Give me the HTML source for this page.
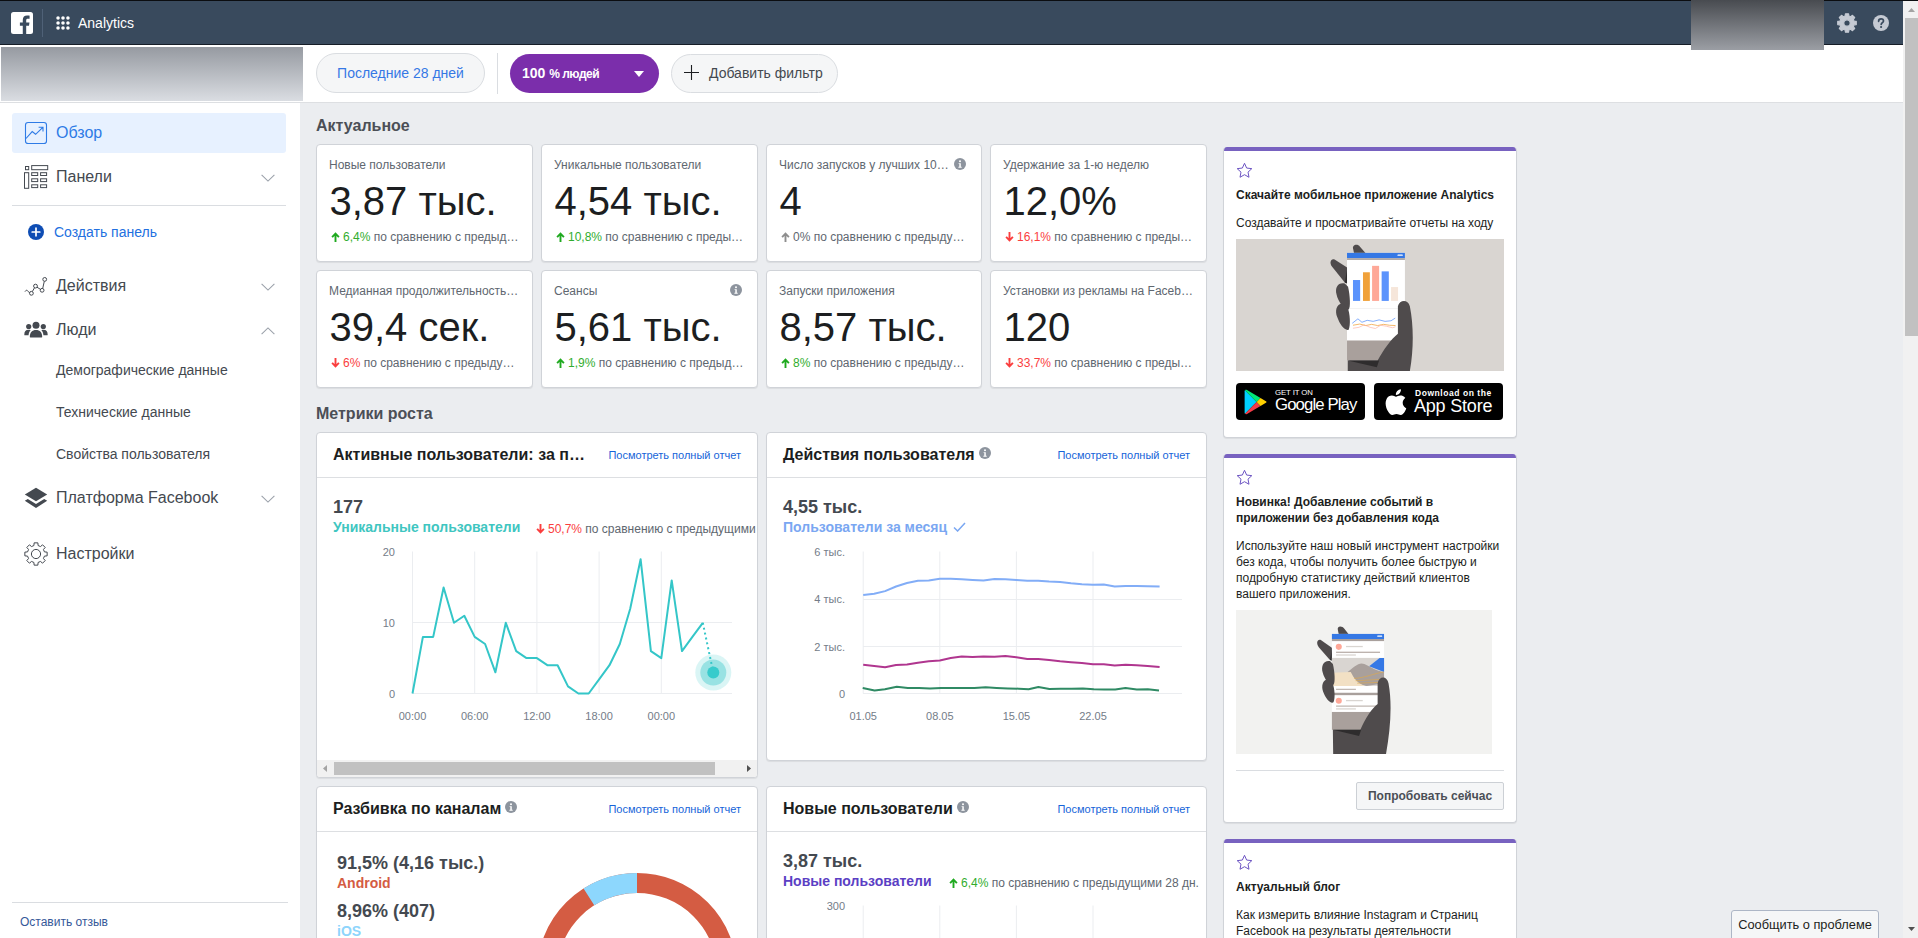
<!DOCTYPE html>
<html lang="ru">
<head>
<meta charset="utf-8">
<title>Analytics</title>
<style>
*{box-sizing:border-box;margin:0;padding:0}
html,body{width:1918px;height:938px;overflow:hidden}
body{position:relative;background:#ebedf0;font-family:"Liberation Sans",Arial,Helvetica,sans-serif;font-size:12px;color:#1c1e21}
.abs{position:absolute}
/* top bar */
#topline{left:0;top:0;width:1918px;height:1px;background:#0b0d10}
#nav{left:0;top:1px;width:1903px;height:44px;background:#394a5d;border-bottom:1px solid #161d27}
#nav .sep{left:42px;top:8px;width:1px;height:28px;background:#4f6177}
#nav .title{left:78px;top:14px;font-size:14px;color:#fff;letter-spacing:0;line-height:16px}
#blur1{left:1691px;top:0;width:133px;height:50px;background:linear-gradient(#484b50,#9b9ea4)}
/* scrollbar */
#sb{left:1903px;top:1px;width:15px;height:937px;background:#f1f1f1}
#sb .thumb{left:2px;top:17px;width:13px;height:318px;background:#c1c1c1}
/* filter bar */
#fbar{left:0;top:45px;width:1903px;height:58px;background:#fff;border-bottom:1px solid #dddfe2}
#blur2{left:1px;top:47px;width:302px;height:54px;background:linear-gradient(#969aa1,#dadde2)}
.pill{height:40px;border-radius:20px;line-height:38px;white-space:nowrap}
#p1{left:316px;top:53px;width:169px;border:1px solid #dadde1;background:#f5f6f7;color:#3578e5;font-size:14px;text-align:center}
#fsep{left:497px;top:53px;width:1px;height:41px;background:#dadde1}
#p2{left:510px;top:54px;width:149px;height:39px;border-radius:19.500px;background:#7b2eab;color:#fff;font-weight:bold;font-size:12px;letter-spacing:-.5px;line-height:38px;padding-left:12px}
#p2 b{font-size:14px;letter-spacing:0;margin-right:1px}
#p2 i{position:absolute;left:124px;top:17px;border:5px solid transparent;border-top:6px solid #fff;border-bottom:0}
#p3{left:671px;top:54px;width:167px;height:39px;border-radius:19.500px;border:1px solid #dadde1;background:#f5f6f7;color:#444950;font-size:14px;line-height:36px;padding-left:37px}
#p3 svg{position:absolute;left:12px;top:10px}
/* sidebar */
#side{left:0;top:103px;width:300px;height:835px;background:#fff}
.nav1{left:12px;width:274px;height:40px;border-radius:3px;font-size:16px;color:#444950;line-height:40px;padding-left:44px}
.nav1 svg.ic{position:absolute;left:12px;top:8px}
.nav1 svg.ch{position:absolute;left:249px;top:17px}
.nav1.sel{background:#e7f1ff;color:#2e7be6}
.sub{left:56px;font-size:14px;color:#444950;line-height:18px}
.hr{height:1px;background:#dadde1}
/* section titles */
.stitle{font-size:16px;font-weight:bold;color:#4b4f56;line-height:20px}
/* stat cards */
.card{background:#fff;border:1px solid #d0d3d8;border-radius:4px;box-shadow:0 1px 1px rgba(0,0,0,.07)}
.stat{width:217px;height:118px}
.stat .lb{position:absolute;left:12px;top:13px;width:190px;font-size:12px;color:#606770;line-height:14px;white-space:nowrap;overflow:hidden;text-overflow:ellipsis}
.stat .num{position:absolute;left:12.500px;top:33px;font-size:40px;line-height:46px;color:#1c1e21;white-space:nowrap}
.stat .ch{position:absolute;left:13px;top:85px;width:190px;font-size:12px;line-height:14px;color:#606770;white-space:nowrap;overflow:hidden;text-overflow:ellipsis}
.up{color:#31ad2e}.dn{color:#fa3e3e}.nt{color:#606770}
.up svg{color:#1fa91f}
.nt svg{color:#8e8e8e}
.ar{display:inline-block;vertical-align:-1px;margin-left:.500px;margin-right:3.500px}
.info{position:absolute}

/* chart cards */
.cc{overflow:hidden}
.cc .hd{position:absolute;left:0;top:0;right:0;height:45px;border-bottom:1px solid #dddfe2}
.cc .tt{position:absolute;left:16px;top:12px;font-size:16px;font-weight:bold;line-height:20px;color:#1c1e21;white-space:nowrap}
.cc .lk{position:absolute;right:16px;top:15px;font-size:11px;line-height:14px;color:#1664d9;white-space:nowrap}
.cc .big{position:absolute;font-size:18px;font-weight:bold;line-height:22px;color:#444950;white-space:nowrap}
.cc .ser{position:absolute;font-size:14px;font-weight:bold;line-height:18px;white-space:nowrap}
.cc .cmp{position:absolute;font-size:12px;line-height:14px;color:#606770;white-space:nowrap}
.cc svg text{font-family:"Liberation Sans",Arial,sans-serif;font-size:11px;fill:#747c88}
.cc .info{position:static;display:inline-block;vertical-align:1px;margin-left:4px}

/* right column */
.rc{width:294px;overflow:hidden;border-top:0}
.rc .bar{position:absolute;left:-1px;right:-1px;top:0;height:4px;background:#7862c0}
.rc .star{position:absolute;left:12px;top:15px}
.rc .h{position:absolute;left:12px;font-size:12px;font-weight:bold;line-height:16px;color:#1c1e21;white-space:nowrap}
.rc .p{position:absolute;left:12px;font-size:12px;line-height:16px;color:#1c1e21;white-space:nowrap}
.badge{position:absolute;top:235.500px;width:129px;height:37.500px;background:#000;border-radius:4px;color:#fff}
.badge span{position:absolute;white-space:nowrap;line-height:1}
.btn{position:absolute;background:#f5f6f7;border:1px solid #ccd0d5;border-radius:2px;font-size:12px;font-weight:bold;color:#4b4f56;text-align:center;white-space:nowrap}
</style>
</head>
<body>
<div id="topline" class="abs"></div>
<div id="nav" class="abs">
  <svg class="abs" style="left:11px;top:11px" width="22" height="22" viewBox="0 0 22 22"><rect width="22" height="22" rx="2.5" fill="#fff"/><path d="M15.2 22v-8.3h2.8l.45-3.3H15.2V8.3c0-.95.27-1.6 1.63-1.6h1.75V3.75c-.3-.04-1.34-.13-2.55-.13-2.52 0-4.25 1.54-4.25 4.37v2.4H8.9v3.3h2.88V22z" fill="#394a5d"/></svg>
  <div class="abs sep"></div>
  <svg class="abs" style="left:56px;top:15px" width="14" height="14" viewBox="0 0 15 15" fill="#fff"><circle cx="2.2" cy="2.2" r="1.9"/><circle cx="7.5" cy="2.2" r="1.9"/><circle cx="12.8" cy="2.2" r="1.9"/><circle cx="2.2" cy="7.5" r="1.9"/><circle cx="7.5" cy="7.5" r="1.9"/><circle cx="12.8" cy="7.5" r="1.9"/><circle cx="2.2" cy="12.8" r="1.9"/><circle cx="7.5" cy="12.8" r="1.9"/><circle cx="12.8" cy="12.8" r="1.9"/></svg>
  <div class="abs title">Analytics</div>
  <svg class="abs" style="left:1836px;top:11px" width="22" height="22" viewBox="0 0 22 22"><path d="M9.13 3.94L9.46 1.73L12.54 1.73L12.87 3.94L14.67 4.69L16.47 3.35L18.65 5.53L17.31 7.33L18.06 9.13L20.27 9.46L20.27 12.54L18.06 12.87L17.31 14.67L18.65 16.47L16.47 18.65L14.67 17.31L12.87 18.06L12.54 20.27L9.46 20.27L9.13 18.06L7.33 17.31L5.53 18.65L3.35 16.47L4.69 14.67L3.94 12.87L1.73 12.54L1.73 9.46L3.94 9.13L4.69 7.33L3.35 5.53L5.53 3.35L7.33 4.69Z M11 7.800A3.200 3.200 0 1 0 11 14.200A3.200 3.200 0 1 0 11 7.800Z" fill="#c5cad3" fill-rule="evenodd" stroke="#c5cad3" stroke-width="1.200" stroke-linejoin="round"/></svg>
  <svg class="abs" style="left:1873px;top:14px" width="16" height="16" viewBox="0 0 16 16"><circle cx="8" cy="8" r="8" fill="#c5cad3"/><path d="M5.600 6.300C5.600 4.700 6.700 3.900 8.100 3.900C9.500 3.900 10.500 4.700 10.500 6C10.500 7.600 8.500 7.700 8.200 9.400" fill="none" stroke="#394a5d" stroke-width="1.700" stroke-linecap="round"/><circle cx="8.100" cy="12" r="1.100" fill="#394a5d"/></svg>
</div>
<div id="sb" class="abs"><div class="abs thumb"></div>
  <svg class="abs" style="left:5px;top:7px" width="7" height="4" viewBox="0 0 7 4"><path d="M0 4L3.500 0L7 4z" fill="#a3a3a3"/></svg>
  <svg class="abs" style="left:5px;top:926px" width="7" height="4" viewBox="0 0 7 4"><path d="M0 0L3.500 4L7 0z" fill="#505050"/></svg>
</div>
<div id="fbar" class="abs"></div>
<div id="blur2" class="abs"></div>
<div id="blur1" class="abs"></div>
<div id="p1" class="abs pill">Последние 28 дней</div>
<div id="fsep" class="abs"></div>
<div id="p2" class="abs"><b>100</b> % людей<i></i></div>
<div id="p3" class="abs"><svg width="15" height="15" viewBox="0 0 15 15"><path d="M7.500 0v15M0 7.500h15" stroke="#1c1e21" stroke-width="1.100" fill="none"/></svg>Добавить фильтр</div>

<!-- SIDEBAR -->
<div id="side" class="abs"></div>
<div id="sidebar-items">
<div class="abs nav1 sel" style="top:113px"><svg class="ic" width="24" height="24" viewBox="0 0 24 24" fill="none" stroke="#2e7be6" stroke-width="1.1"><rect x="1.5" y="1.5" width="21" height="21" rx="2.6"/><path d="M2 17.5L8.2 10.6L11.6 13.3L18.6 6.6M14.6 6.2H19V10.6" stroke-linejoin="miter"/></svg>Обзор</div>
<div class="abs nav1" style="top:157px"><svg class="ic" width="25" height="24" viewBox="0 0 25 24" fill="none" stroke="#444950" stroke-width="1"><rect x="1.5" y="1.5" width="3.2" height="3.2"/><rect x="7.7" y="0.6" width="16" height="4.1"/><rect x="0.5" y="7.7" width="4.2" height="15.6"/><rect x="7.7" y="7.7" width="6" height="2.8"/><rect x="16.6" y="7.7" width="6" height="2.8"/><rect x="7.7" y="13.8" width="6" height="2.8"/><rect x="16.6" y="13.8" width="6" height="2.8"/><rect x="7.7" y="19.8" width="6" height="2.8"/><rect x="16.6" y="19.8" width="6" height="2.8"/></svg>Панели<svg class="ch" width="14" height="8" viewBox="0 0 14 8"><path d="M.6 .8L7 7.1L13.4 .8" fill="none" stroke="#9ba1aa" stroke-width="1.1"/></svg></div>
<div class="abs hr" style="left:12px;top:205px;width:274px"></div>
<svg class="abs" style="left:28px;top:224px" width="16" height="16" viewBox="0 0 16 16"><circle cx="8" cy="8" r="8" fill="#0e4db4"/><path d="M8 4.200v7.600M4.200 8h7.600" stroke="#fff" stroke-width="1.700" stroke-linecap="round"/></svg>
<div class="abs" style="left:54px;top:223px;font-size:14px;line-height:18px;color:#2370e0">Создать панель</div>
<div class="abs nav1" style="top:266px"><svg class="ic" width="24" height="24" viewBox="0 0 24 24" fill="none" stroke="#444950" stroke-width="1"><path d="M1 17.6c1-1.6 2-1.8 2.8-.6s1.400 1.600 2.1 1.500M8.3 17.600L10.500 13.800M13 13.200L16.500 15.400M18.700 14.500L20.300 7.300"/><circle cx="7.400" cy="19.300" r="1.900"/><circle cx="11.500" cy="12.100" r="1.900"/><circle cx="18.100" cy="16.300" r="1.900"/><circle cx="20.700" cy="5.400" r="1.900"/></svg>Действия<svg class="ch" width="14" height="8" viewBox="0 0 14 8"><path d="M.6 .8L7 7.1L13.4 .8" fill="none" stroke="#9ba1aa" stroke-width="1.1"/></svg></div>
<div class="abs nav1" style="top:310px"><svg class="ic" width="24" height="24" viewBox="0 0 24 24" fill="#444950"><circle cx="12" cy="7.300" r="3.500"/><circle cx="4.700" cy="8.500" r="2.600"/><circle cx="19.300" cy="8.500" r="2.600"/><path d="M5.800 18.900c0-4.600 2.300-7 6.200-7s6.200 2.400 6.200 7c0 .300-.200 .500-.500 .500H6.300c-.300 0-.500-.200-.500-.500z"/><path d="M.300 16.800c0-3.200 1.400-5 4.200-5 .800 0 1.500 .150 2.100 .450-1.300 1.300-1.900 3-2 5.100H.800c-.300 0-.500-.250-.500-.550z"/><path d="M23.700 16.800c0-3.200-1.400-5-4.200-5-.800 0-1.500 .150-2.100 .450 1.300 1.300 1.900 3 2 5.100h3.800c.300 0 .500-.250 .500-.550z"/></svg>Люди<svg class="ch" width="14" height="8" viewBox="0 0 14 8"><path d="M.6 7.2L7 .9L13.4 7.2" fill="none" stroke="#9ba1aa" stroke-width="1.1"/></svg></div>
<div class="abs sub" style="top:361px">Демографические данные</div>
<div class="abs sub" style="top:403px">Технические данные</div>
<div class="abs sub" style="top:445px">Свойства пользователя</div>
<div class="abs nav1" style="top:478px"><svg class="ic" width="24" height="24" viewBox="0 0 24 24" fill="#444950"><path d="M12 1.700L23.200 8.500L12 15.300L.800 8.500z"/><path d="M.800 14.700L3.800 12.900L12 17.900L20.200 12.900L23.200 14.700L12 21.900z"/></svg>Платформа Facebook<svg class="ch" width="14" height="8" viewBox="0 0 14 8"><path d="M.6 .8L7 7.1L13.4 .8" fill="none" stroke="#9ba1aa" stroke-width="1.1"/></svg></div>
<div class="abs nav1" style="top:534px"><svg class="ic" width="24" height="24" viewBox="0 0 24 24" fill="none" stroke="#444950" stroke-width="1" stroke-linejoin="round"><path d="M9.90 3.56L10.14 0.85L13.86 0.85L14.10 3.56L16.49 4.55L18.57 2.81L21.19 5.43L19.45 7.51L20.44 9.90L23.15 10.14L23.15 13.86L20.44 14.10L19.45 16.49L21.19 18.57L18.57 21.19L16.49 19.45L14.10 20.44L13.86 23.15L10.14 23.15L9.90 20.44L7.51 19.45L5.43 21.19L2.81 18.57L4.55 16.49L3.56 14.10L0.85 13.86L0.85 10.14L3.56 9.90L4.55 7.51L2.81 5.43L5.43 2.81L7.51 4.55Z"/><circle cx="12" cy="12" r="4.600"/></svg>Настройки</div>
<div class="abs hr" style="left:12px;top:902px;width:276px"></div>
<div class="abs" style="left:20px;top:915px;font-size:12px;line-height:14px;color:#365899">Оставить отзыв</div>
</div>

<!-- MAIN -->
<div class="abs stitle" style="left:316px;top:116px">Актуальное</div>
<div id="stats">
<div class="abs card stat" style="left:316px;top:144px"><div class="lb">Новые пользователи</div><div class="num">3,87 тыс.</div><div class="ch"><span class="up"><svg class="ar" width="9" height="10" viewBox="0 0 9 10"><path d="M4.500 10V2M1.100 5.200L4.500 1.700L7.900 5.200" fill="none" stroke="currentColor" stroke-width="1.900"/></svg>6,4%</span> по сравнению с предыдущими 28 дн.</div></div>
<div class="abs card stat" style="left:541px;top:144px"><div class="lb">Уникальные пользователи</div><div class="num">4,54 тыс.</div><div class="ch"><span class="up"><svg class="ar" width="9" height="10" viewBox="0 0 9 10"><path d="M4.500 10V2M1.100 5.200L4.500 1.700L7.900 5.200" fill="none" stroke="currentColor" stroke-width="1.900"/></svg>10,8%</span> по сравнению с предыдущими 28 дн.</div></div>
<div class="abs card stat" style="left:766px;top:144px;width:216px"><div class="lb" style="width:170px">Число запусков у лучших 10 % пользователей</div><svg class="info" style="left:187px;top:13px" width="12" height="12" viewBox="0 0 12 12"><circle cx="6" cy="6" r="6" fill="#8d949e"/><circle cx="6" cy="3.200" r="1" fill="#fff"/><path d="M4.600 5.200h2.200v3.600h.900v.900H4.400v-.900h.900V6.100h-.700z" fill="#fff"/></svg><div class="num">4</div><div class="ch"><span class="nt"><svg class="ar" width="9" height="10" viewBox="0 0 9 10"><path d="M4.500 10V2M1.100 5.200L4.500 1.700L7.900 5.200" fill="none" stroke="currentColor" stroke-width="1.900"/></svg>0%</span> по сравнению с предыдущими 28 дн.</div></div>
<div class="abs card stat" style="left:990px;top:144px"><div class="lb">Удержание за 1-ю неделю</div><div class="num">12,0%</div><div class="ch"><span class="dn"><svg class="ar" width="9" height="10" viewBox="0 0 9 10"><path d="M4.500 0V8M1.100 4.800L4.500 8.300L7.900 4.800" fill="none" stroke="currentColor" stroke-width="1.900"/></svg>16,1%</span> по сравнению с предыдущими 28 дн.</div></div>
<div class="abs card stat" style="left:316px;top:270px"><div class="lb">Медианная продолжительность сеанса</div><div class="num">39,4 сек.</div><div class="ch"><span class="dn"><svg class="ar" width="9" height="10" viewBox="0 0 9 10"><path d="M4.500 0V8M1.100 4.800L4.500 8.300L7.900 4.800" fill="none" stroke="currentColor" stroke-width="1.900"/></svg>6%</span> по сравнению с предыдущими 28 дн.</div></div>
<div class="abs card stat" style="left:541px;top:270px"><div class="lb" style="width:170px">Сеансы</div><svg class="info" style="left:188px;top:13px" width="12" height="12" viewBox="0 0 12 12"><circle cx="6" cy="6" r="6" fill="#8d949e"/><circle cx="6" cy="3.200" r="1" fill="#fff"/><path d="M4.600 5.200h2.200v3.600h.900v.900H4.400v-.900h.900V6.100h-.700z" fill="#fff"/></svg><div class="num">5,61 тыс.</div><div class="ch"><span class="up"><svg class="ar" width="9" height="10" viewBox="0 0 9 10"><path d="M4.500 10V2M1.100 5.200L4.500 1.700L7.900 5.200" fill="none" stroke="currentColor" stroke-width="1.900"/></svg>1,9%</span> по сравнению с предыдущими 28 дн.</div></div>
<div class="abs card stat" style="left:766px;top:270px;width:216px"><div class="lb">Запуски приложения</div><div class="num">8,57 тыс.</div><div class="ch"><span class="up"><svg class="ar" width="9" height="10" viewBox="0 0 9 10"><path d="M4.500 10V2M1.100 5.200L4.500 1.700L7.900 5.200" fill="none" stroke="currentColor" stroke-width="1.900"/></svg>8%</span> по сравнению с предыдущими 28 дн.</div></div>
<div class="abs card stat" style="left:990px;top:270px"><div class="lb">Установки из рекламы на Facebook</div><div class="num">120</div><div class="ch"><span class="dn"><svg class="ar" width="9" height="10" viewBox="0 0 9 10"><path d="M4.500 0V8M1.100 4.800L4.500 8.300L7.900 4.800" fill="none" stroke="currentColor" stroke-width="1.900"/></svg>33,7%</span> по сравнению с предыдущими 28 дн.</div></div>
</div>
<div class="abs stitle" style="left:316px;top:404px">Метрики роста</div>

<!-- CHARTS -->
<div id="charts">
<div class="abs card cc" style="left:316px;top:432px;width:442px;height:346px">
 <div class="hd"><div class="tt">Активные пользователи: за п…</div><div class="lk">Посмотреть полный отчет</div></div>
 <div class="big" style="left:16px;top:63px">177</div>
 <div class="ser" style="left:16px;top:85px;color:#3fc6c1">Уникальные пользователи</div>
 <div class="cmp" style="left:218px;top:89px"><span class="dn"><svg class="ar" width="9" height="10" viewBox="0 0 9 10"><path d="M4.500 0V8M1.100 4.800L4.500 8.300L7.900 4.800" fill="none" stroke="currentColor" stroke-width="1.900"/></svg>50,7%</span> по сравнению с предыдущими 24 ч</div>
 <svg class="abs" style="left:-1px;top:-1px" width="442" height="330" viewBox="0 0 442 330">
  <g fill="none" stroke="#ebedf0" stroke-width="1"><path d="M96.5 119.500V261.500" /><path d="M158.7 119.500V261.500" /><path d="M220.9 119.500V261.500" /><path d="M283.1 119.500V261.500" /><path d="M345.3 119.500V261.500" /><path d="M96 190.500H416M96 261.500H416"/></g>
  <text x="79" y="123.500" text-anchor="end">20</text><text x="79" y="194.500" text-anchor="end">10</text><text x="79" y="265.500" text-anchor="end">0</text>
  <text x="96.5" y="288" text-anchor="middle">00:00</text><text x="158.7" y="288" text-anchor="middle">06:00</text><text x="220.9" y="288" text-anchor="middle">12:00</text><text x="283.1" y="288" text-anchor="middle">18:00</text><text x="345.3" y="288" text-anchor="middle">00:00</text>
  <polyline points="96.5,261.5 106.9,204.9 117.2,204.9 127.6,155.5 138.0,190.8 148.3,183.7 158.7,204.9 169.1,212.0 179.4,240.3 189.8,190.8 200.2,219.1 210.5,226.1 220.9,226.1 231.3,233.2 241.6,233.2 252.0,254.4 262.4,261.5 272.7,261.5 283.1,247.4 293.5,233.2 303.8,212.0 314.2,176.7 324.6,127.2 334.9,219.1 345.3,226.1 355.7,148.4 366.0,219.1 376.4,204.9 386.8,190.8" fill="none" stroke="#34c6c8" stroke-width="2" stroke-linejoin="round"/>
  <path d="M386.8 190.8L397.3 240.5" stroke="#34c6c8" stroke-width="2" stroke-dasharray="2 3" fill="none"/>
  <circle cx="397.3" cy="240.5" r="18" fill="#34c6c8" fill-opacity=".18"/><circle cx="397.3" cy="240.5" r="13" fill="#34c6c8" fill-opacity=".4"/><circle cx="397.3" cy="240.5" r="6" fill="#37cbcc"/>
 </svg>
 <div class="abs" style="left:0;top:327px;width:440px;height:17px;background:#f1f1f1">
   <div class="abs" style="left:17px;top:2px;width:381px;height:13px;background:#c1c1c1"></div>
   <svg class="abs" style="left:6px;top:5px" width="4" height="7" viewBox="0 0 4 7"><path d="M4 0L0 3.500L4 7z" fill="#a3a3a3"/></svg>
   <svg class="abs" style="left:430px;top:5px" width="4" height="7" viewBox="0 0 4 7"><path d="M0 0L4 3.500L0 7z" fill="#505050"/></svg>
 </div>
</div>
<div class="abs card cc" style="left:766px;top:432px;width:441px;height:329px">
 <div class="hd"><div class="tt">Действия пользователя<svg class="info" width="12" height="12" viewBox="0 0 12 12"><circle cx="6" cy="6" r="6" fill="#8d949e"/><circle cx="6" cy="3.200" r="1" fill="#fff"/><path d="M4.600 5.200h2.200v3.600h.900v.900H4.400v-.900h.900V6.100h-.700z" fill="#fff"/></svg></div><div class="lk">Посмотреть полный отчет</div></div>
 <div class="big" style="left:16px;top:63px">4,55 тыс.</div>
 <div class="ser" style="left:16px;top:85px;color:#7aa7f2">Пользователи за месяц <svg width="13" height="10" viewBox="0 0 13 10" style="margin-left:2px"><path d="M1 5.500L4.600 9L12 1" fill="none" stroke="#7aa7f2" stroke-width="1.500"/></svg></div>
 <svg class="abs" style="left:-1.500px;top:-1px" width="442" height="330" viewBox="0 0 442 330">
  <g fill="none" stroke="#ebedf0" stroke-width="1"><path d="M97.2 119.500V261.500" /><path d="M173.8 119.500V261.500" /><path d="M250.4 119.500V261.500" /><path d="M327.0 119.500V261.500" /><path d="M97 167.500H416M97 214.500H416M97 261.500H416"/></g>
  <text x="79" y="123.500" text-anchor="end">6 тыс.</text><text x="79" y="171" text-anchor="end">4 тыс.</text><text x="79" y="218.500" text-anchor="end">2 тыс.</text><text x="79" y="265.500" text-anchor="end">0</text>
  <text x="97.2" y="288" text-anchor="middle">01.05</text><text x="173.8" y="288" text-anchor="middle">08.05</text><text x="250.4" y="288" text-anchor="middle">15.05</text><text x="327.0" y="288" text-anchor="middle">22.05</text>
  <polyline points="97.2,163.1 108.2,161.7 119.1,159.1 130.0,154.5 141.0,151.0 151.9,148.7 162.8,148.4 173.8,146.7 184.7,146.7 195.7,147.3 206.6,147.9 217.5,148.4 228.5,147.0 239.4,147.3 250.3,148.1 261.3,148.7 272.2,148.7 283.1,149.6 294.1,149.9 305.0,151.3 315.9,152.2 326.9,152.7 337.8,152.5 348.7,154.5 359.7,153.9 370.6,153.9 381.6,154.2 393.6,154.5" fill="none" stroke="#82adf7" stroke-width="2" stroke-linejoin="round"/>
  <polyline points="97.2,232.7 108.2,233.9 119.1,235.3 130.0,233.0 141.0,232.5 151.9,230.7 162.8,229.3 173.8,228.4 184.7,226.1 195.7,224.4 206.6,225.0 217.5,224.4 228.5,224.7 239.4,224.1 250.3,225.3 261.3,227.0 272.2,227.0 283.1,228.1 294.1,229.3 305.0,230.2 315.9,231.0 326.9,232.2 337.8,232.2 348.7,233.6 359.7,232.7 370.6,233.3 381.6,233.9 393.6,235.1" fill="none" stroke="#b0368f" stroke-width="2" stroke-linejoin="round"/>
  <polyline points="96.7,256.1 108.6,258.5 118.9,257.3 130.8,254.7 141.8,256.1 153.0,255.9 164.0,256.4 175.2,256.1 186.5,256.1 197.5,255.9 208.4,255.9 219.7,255.3 230.6,255.9 241.9,256.4 252.9,256.7 262.6,257.3 272.4,255.0 283.4,257.0 294.4,256.7 305.6,256.7 316.9,256.4 327.8,257.3 338.2,257.6 349.2,257.6 359.5,256.1 370.8,257.6 381.8,257.3 393.0,258.5" fill="none" stroke="#2f8a64" stroke-width="2" stroke-linejoin="round"/>
 </svg>
</div>
<div class="abs card cc" style="left:316px;top:786px;width:442px;height:200px">
 <div class="hd"><div class="tt">Разбивка по каналам<svg class="info" width="12" height="12" viewBox="0 0 12 12"><circle cx="6" cy="6" r="6" fill="#8d949e"/><circle cx="6" cy="3.200" r="1" fill="#fff"/><path d="M4.600 5.200h2.200v3.600h.900v.900H4.400v-.900h.900V6.100h-.700z" fill="#fff"/></svg></div><div class="lk">Посмотреть полный отчет</div></div>
 <div class="big" style="left:20px;top:65px">91,5% (4,16 тыс.)</div>
 <div class="ser" style="left:20px;top:87px;color:#d45c43">Android</div>
 <div class="big" style="left:20px;top:113px">8,96% (407)</div>
 <div class="ser" style="left:20px;top:135px;color:#8ed5fc">iOS</div>
 <svg class="abs" style="left:200px;top:70px" width="240" height="130" viewBox="200 70 240 130">
  <circle cx="320" cy="186" r="90" fill="none" stroke="#d45c43" stroke-width="20"/>
  <path d="M320 96A90 90 0 0 0 271.900 109.900" fill="none" stroke="#8dd7fd" stroke-width="20"/>
 </svg>
</div>
<div class="abs card cc" style="left:766px;top:786px;width:441px;height:200px">
 <div class="hd"><div class="tt">Новые пользователи<svg class="info" width="12" height="12" viewBox="0 0 12 12"><circle cx="6" cy="6" r="6" fill="#8d949e"/><circle cx="6" cy="3.200" r="1" fill="#fff"/><path d="M4.600 5.200h2.200v3.600h.900v.900H4.400v-.900h.900V6.100h-.700z" fill="#fff"/></svg></div><div class="lk">Посмотреть полный отчет</div></div>
 <div class="big" style="left:16px;top:63px">3,87 тыс.</div>
 <div class="ser" style="left:16px;top:85px;color:#5b3fc4">Новые пользователи</div>
 <div class="cmp" style="left:181px;top:89px"><span class="up"><svg class="ar" width="9" height="10" viewBox="0 0 9 10"><path d="M4.500 10V2M1.100 5.200L4.500 1.700L7.900 5.200" fill="none" stroke="currentColor" stroke-width="1.900"/></svg>6,4%</span> по сравнению с предыдущими 28 дн.</div>
 <svg class="abs" style="left:-1.500px;top:-1px" width="442" height="200" viewBox="0 0 442 200">
  <g fill="none" stroke="#ebedf0" stroke-width="1"><path d="M97.2 119.500V200" /><path d="M173.8 119.500V200" /><path d="M250.4 119.500V200" /><path d="M327.0 119.500V200" /></g>
  <text x="79" y="123.500" text-anchor="end">300</text>
 </svg>
</div>
</div>
<!-- RIGHT -->
<div id="right">
<div class="abs card rc" style="left:1223px;top:147px;height:291px"><div class="bar"></div><svg class="star" width="17" height="17" viewBox="0 0 17 17"><path d="M8.500 1.300L10.650 6.050L15.800 6.650L12 10.150L13 15.250L8.500 12.700L4 15.250L5 10.150L1.200 6.650L6.350 6.050Z" fill="none" stroke="#6c54c2" stroke-width="1" stroke-linejoin="round"/></svg>
 <div class="h" style="top:40px">Скачайте мобильное приложение Analytics</div>
 <div class="p" style="top:68px">Создавайте и просматривайте отчеты на ходу</div>
 <svg class="abs" style="left:12px;top:92px" width="268" height="132" viewBox="0 0 268 132"><rect width="268" height="132" fill="#d9d5d1"/>
<g transform="translate(64,-3) scale(0.14925)">
<path d="M357 90C345 60 385 48 402 72L440 115L362 115Z" fill="#4f4b4c"/>
<path d="M318 212L232 158C208 146 194 178 214 204L300 312L332 322Z" fill="#4f4b4c"/>
<path d="M318 212L300 312L320 320Z" fill="#2e2c2d"/>
<rect x="315" y="113" width="388" height="722" fill="#fff"/>
<rect x="315" y="113" width="388" height="36" fill="#3578e5"/><rect x="653" y="124" width="36" height="9" rx="3" fill="#fff"/>
<rect x="315" y="149" width="388" height="11" fill="#a9a09c"/>
<rect x="355" y="295" width="48" height="140" fill="#5b93fc"/><rect x="422" y="243" width="46" height="192" fill="#f0a13a"/><rect x="483" y="200" width="47" height="235" fill="#fea898"/><rect x="547" y="237" width="48" height="198" fill="#5b93fc"/><rect x="610" y="342" width="47" height="93" fill="#f6e6da"/>
<rect x="315" y="483" width="388" height="4" fill="#ebebeb"/>
<path d="M350 585L388 555L415 578L450 565L490 572L530 562L570 572L610 568L638 550" fill="none" stroke="#5b93fc" stroke-width="5"/>
<path d="M355 598L400 590L440 600L480 592L520 600L560 592L600 598L640 600" fill="none" stroke="#f0a13a" stroke-width="5"/>
<path d="M355 618L395 612L430 595L470 612L505 620L540 598L580 605L620 615L640 608" fill="none" stroke="#fea898" stroke-width="4"/>
<rect x="315" y="700" width="388" height="135" fill="#a9a09c"/>
<path d="M300 318C258 308 232 342 245 392C256 442 300 502 326 492C340 480 336 400 322 340Z" fill="#4f4b4c"/>
<path d="M282 452C244 458 232 500 250 545C266 592 300 638 326 628C340 600 336 520 318 478Z" fill="#4f4b4c"/>
<path d="M656 470C666 428 722 420 736 470C762 600 762 760 736 905L320 905L320 835L520 835C560 760 612 690 656 655Z" fill="#4f4b4c"/>
<path d="M320 835L530 835L515 880Z" fill="#2e2c2d"/>
</g></svg><div class="badge" style="left:12px"><svg class="abs" style="left:8px;top:6px" width="24" height="26" viewBox="0 0 24 26"><path d="M1 1.200C.700 1.500 .600 2 .600 2.600V23.400C.600 24 .700 24.500 1 24.800L12.600 13Z" fill="#00d0ff"/><path d="M16.500 16.900L12.600 13L1 24.800C1.500 25.300 2.200 25.300 3 24.900Z" fill="#f33b48"/><path d="M16.500 9.100L3 1.100C2.200 .700 1.500 .700 1 1.200L12.600 13Z" fill="#00e879"/><path d="M16.500 9.100L12.600 13L16.500 16.900L21.500 14C22.900 13.200 22.900 12.800 21.500 12Z" fill="#ffd000"/></svg><span style="left:39px;top:6.500px;font-size:7.800px;letter-spacing:-.1px">GET IT ON</span><span style="left:39px;top:14.500px;font-size:16.800px;letter-spacing:-.9px">Google Play</span></div><div class="badge" style="left:150px"><svg class="abs" style="left:11px;top:5px" width="22" height="28" viewBox="0 0 22 28"><path d="M17.700 14.800c0-3.200 2.600-4.700 2.700-4.800-1.500-2.200-3.800-2.500-4.600-2.500-2-.200-3.800 1.200-4.800 1.200s-2.500-1.100-4.100-1.100C4.800 7.600 2.800 8.800 1.700 10.700c-2.300 4-.600 9.800 1.600 13 1.100 1.600 2.400 3.300 4 3.300 1.600-.100 2.200-1 4.200-1 1.900 0 2.500 1 4.200 1 1.700 0 2.800-1.600 3.900-3.100 1.200-1.800 1.700-3.500 1.700-3.600-.100 0-3.500-1.400-3.600-5.500zM14.600 5.200c.900-1.100 1.500-2.500 1.300-4-1.300 .100-2.800 .900-3.700 1.900-.800 .900-1.500 2.400-1.300 3.800 1.400 .100 2.800-.700 3.700-1.700z" fill="#fff"/></svg><span style="left:41px;top:6px;font-size:8.500px;font-weight:bold;letter-spacing:.55px">Download on the</span><span style="left:40px;top:14.500px;font-size:18px;letter-spacing:-.2px">App Store</span></div>
</div>
<div class="abs card rc" style="left:1223px;top:454px;height:369px"><div class="bar"></div><svg class="star" width="17" height="17" viewBox="0 0 17 17"><path d="M8.500 1.300L10.650 6.050L15.800 6.650L12 10.150L13 15.250L8.500 12.700L4 15.250L5 10.150L1.200 6.650L6.350 6.050Z" fill="none" stroke="#6c54c2" stroke-width="1" stroke-linejoin="round"/></svg>
 <div class="h" style="top:40px">Новинка! Добавление событий в<br>приложении без добавления кода</div>
 <div class="p" style="top:84px">Используйте наш новый инструмент настройки<br>без кода, чтобы получить более быструю и<br>подробную статистику действий клиентов<br>вашего приложения.</div>
 <svg class="abs" style="left:12px;top:156px" width="256" height="144" viewBox="0 0 256 144"><rect width="256" height="144" fill="#f2f2f0"/>
<g transform="translate(54,-2) scale(0.15992)">
<path d="M300 140C290 112 325 108 340 130L368 165L305 165Z" fill="#4f4b4c"/>
<path d="M264 250L195 202C172 190 160 220 180 245L250 325L272 330Z" fill="#4f4b4c"/>
<path d="M264 250L250 325L268 330Z" fill="#2e2c2d"/>
<rect x="262" y="162" width="326" height="600" fill="#fff"/>
<rect x="262" y="162" width="326" height="32" fill="#3578e5"/><rect x="545" y="172" width="32" height="8" rx="3" fill="#fff"/>
<rect x="262" y="194" width="326" height="13" fill="#a9a09c"/>
<circle cx="305" cy="243" r="19" fill="#fea898"/><rect x="350" y="237" width="105" height="8" fill="#d9d5d1"/><rect x="288" y="273" width="275" height="8" fill="#b9afa9"/><rect x="288" y="290" width="124" height="8" fill="#d9d5d1"/>
<rect x="262" y="312" width="326" height="175" fill="#d9d5d1"/>
<path d="M495 365L560 312L588 312L588 400Z" fill="#3578e5"/>
<path d="M360 400C400 370 430 335 465 350C510 370 540 395 588 400L588 470L480 487L400 470Z" fill="#a9a09c"/>
<path d="M262 405L380 400C400 440 420 470 470 487L262 487Z" fill="#f2e0c4"/>
<path d="M400 440C460 440 520 410 588 400M410 455L588 445M420 470L560 465" fill="none" stroke="#e0a94a" stroke-width="4"/>
<rect x="288" y="505" width="124" height="7" fill="#b9afa9"/>
<rect x="262" y="530" width="326" height="15" fill="#a9a09c"/>
<circle cx="305" cy="580" r="19" fill="#fea898"/><rect x="350" y="575" width="105" height="8" fill="#d9d5d1"/><rect x="288" y="610" width="275" height="7" fill="#b9afa9"/><rect x="288" y="627" width="124" height="8" fill="#d9d5d1"/>
<rect x="262" y="650" width="326" height="112" fill="#a9a09c"/>
<path d="M250 332C212 325 192 360 205 405C215 445 250 490 272 480C284 465 280 400 268 350Z" fill="#4f4b4c"/>
<path d="M235 445C204 450 194 488 208 525C222 565 252 600 272 590C284 565 280 500 264 466Z" fill="#4f4b4c"/>
<path d="M548 470C556 425 606 420 616 470C640 600 628 760 600 915L270 915L268 762L440 762C470 690 510 630 548 600Z" fill="#4f4b4c"/>
<path d="M268 762L445 762L432 800Z" fill="#2e2c2d"/>
</g></svg>
 <div class="abs" style="left:12px;top:316px;width:268px;height:1px;background:#dadde1"></div>
 <div class="btn" style="left:132px;top:328px;width:148px;height:28px;line-height:26px">Попробовать сейчас</div>
</div>
<div class="abs card rc" style="left:1223px;top:839px;height:200px"><div class="bar"></div><svg class="star" width="17" height="17" viewBox="0 0 17 17"><path d="M8.500 1.300L10.650 6.050L15.800 6.650L12 10.150L13 15.250L8.500 12.700L4 15.250L5 10.150L1.200 6.650L6.350 6.050Z" fill="none" stroke="#6c54c2" stroke-width="1" stroke-linejoin="round"/></svg>
 <div class="h" style="top:40px">Актуальный блог</div>
 <div class="p" style="top:68px">Как измерить влияние Instagram и Страниц<br>Facebook на результаты деятельности</div>
</div>
<div class="btn" style="left:1731px;top:910px;width:148px;height:40px;line-height:28px;font-size:12.800px;font-weight:normal;color:#1c1e21;border-color:#adb6c6;border-radius:3px">Сообщить о проблеме</div>
</div>
</body>
</html>
